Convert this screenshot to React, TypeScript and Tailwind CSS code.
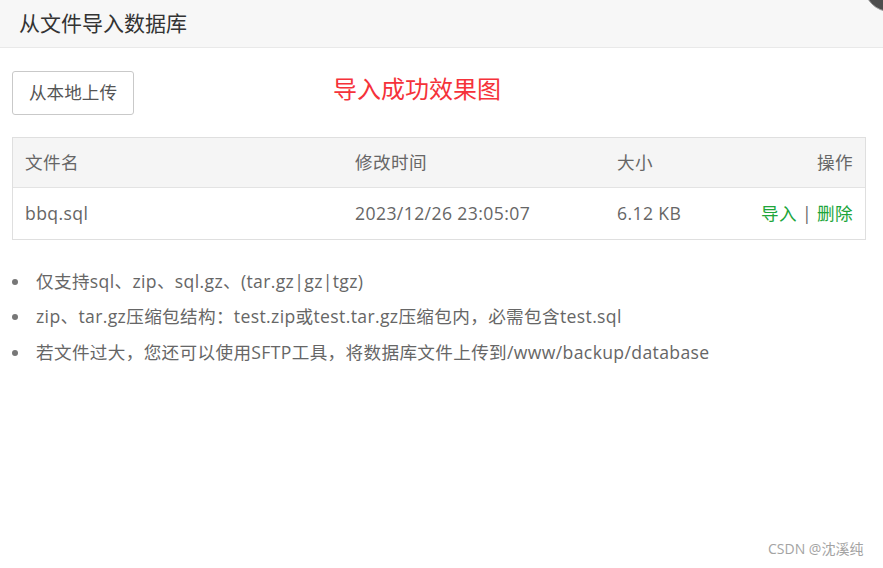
import React from "react";

const font = { fontFamily: '"Open Sans", "Noto Sans CJK SC", sans-serif' };

export default function App() {
  const tips = [
    "仅支持sql、zip、sql.gz、(tar.gz|gz|tgz)",
    "zip、tar.gz压缩包结构：test.zip或test.tar.gz压缩包内，必需包含test.sql",
    "若文件过大，您还可以使用SFTP工具，将数据库文件上传到/www/backup/database",
  ];
  return (
    <div
      className="relative w-[883px] h-[568px] overflow-hidden bg-white"
      style={font}
    >
      <div className="absolute left-[864px] top-[-40px] w-[52px] h-[52px] rounded-full bg-[#4d4d4d] border border-[#9a9a9a]" />
      <div className="h-[48px] bg-[#f7f7f7] border-b border-[#e9e9e9] flex items-center pl-[19px] text-[21px] text-[#333] leading-none">
        从文件导入数据库
      </div>
      <div className="px-[12px] pr-[17px]">
        <div className="flex items-center mt-[23px] h-[44px]">
          <button className="h-[44px] w-[122px] border border-[#c9c9c9] rounded-[3px] bg-white text-[17.6px] text-[#555] leading-none">
            从本地上传
          </button>
          <div className="ml-[199px] -mt-[8px] text-[24px] text-[#f5323a] leading-none">
            导入成功效果图
          </div>
        </div>
        <div className="mt-[22px] border border-[#dfdfdf] text-[17.6px] text-[#666] leading-none tracking-[0.4px]">
          <div className="flex items-center h-[50px] bg-[#f5f5f5] border-b border-[#e3e3e3] px-[12px]">
            <div className="w-[330px]">文件名</div>
            <div className="w-[262px]">修改时间</div>
            <div className="w-[100px]">大小</div>
            <div className="flex-1 text-right">操作</div>
          </div>
          <div className="flex items-center h-[51px] px-[12px]">
            <div className="w-[330px]">bbq.sql</div>
            <div className="w-[262px]">2023/12/26 23:05:07</div>
            <div className="w-[100px]">6.12 KB</div>
            <div className="flex-1 text-right">
              <span className="text-[#20a53a]">导入</span>
              <span className="text-[#666]"> | </span>
              <span className="text-[#20a53a]">删除</span>
            </div>
          </div>
        </div>
        <ul className="mt-[24px] text-[17.6px] text-[#666] tracking-[0.35px]">
          {tips.map((t) => (
            <li key={t} className="flex items-center h-[35.5px]">
              <span className="w-[6px] h-[6px] rounded-full bg-[#777] ml-[0px] mr-[18px]" />
              <span className="leading-none">{t}</span>
            </li>
          ))}
        </ul>
      </div>
      <div className="absolute left-[768px] top-[542px] text-[14px] text-[#a3a3a3] leading-none">
        CSDN @沈溪纯
      </div>
    </div>
  );
}
